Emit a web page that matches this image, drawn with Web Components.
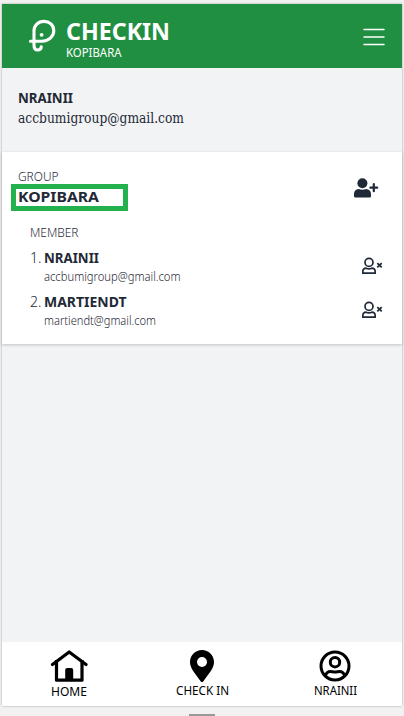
<!DOCTYPE html>
<html lang="en"><head><meta charset="utf-8"><title>Checkin</title>
<style>html,body{margin:0;height:100%;overflow:hidden;background:#f0f0f0}body{font-family:"Noto Sans",sans-serif;color:#1f2937}</style></head>
<body><checkin-app></checkin-app>
<script>
const define=(name,html,ready)=>customElements.define(name,class extends HTMLElement{
  constructor(){super();this.attachShadow({mode:'open'}).innerHTML=html;}
  connectedCallback(){if(ready)ready(this);}
});

// One line of text set to a given measure.
define('text-line',`<style>:host{display:block;white-space:nowrap;text-align:left}span{display:inline-block;transform-origin:0 50%;vertical-align:top}</style><span></span>`,el=>{
  const s=el.shadowRoot.querySelector('span');
  s.textContent=el.getAttribute('text');
  const w=+el.getAttribute('measure');
  el.style.width=w+'px';
  s.style.transform=`scaleX(${w/s.getBoundingClientRect().width})`;
});

const icons={
 logo:['0 0 30 36','<g fill="none" stroke="#fff" stroke-width="3.1" stroke-linecap="round"><path d="M2.5 23.2H14C20.5 23.2 25.8 18.5 25.8 12.7C25.8 7 21.5 3.4 16 3.4C10.2 3.4 6 7.6 6 13V27C6 30.6 7.2 32 9.6 32C12 32 13.2 30.5 13.3 28.7"/></g><circle cx="13.6" cy="16.8" r="1.9" fill="#fff"/>'],
 menu:['0 0 24 24','<g fill="none" stroke="#fff" stroke-linecap="round"><path stroke-width="1.5" d="M2 4.5H22M2 19.5H22"/><path stroke-width="1.5" d="M2 12H22"/></g>'],
 add:['0 0 26 22','<g fill="#1f2937"><circle cx="9.4" cy="6.2" r="5"/><path d="M5.7 11.9C7.8 13 11 13 13.1 11.9C16.2 12.1 18 13.9 18 16.9V19.2Q18 20.6 16.6 20.6H2.4Q1 20.6 1 19.2V16.9C1 13.9 2.7 12.1 5.7 11.9Z"/></g><path d="M20.8 7.2V14.2M17.4 10.7H24.2" stroke="#1f2937" stroke-width="2.2" stroke-linecap="round"/>'],
 remove:['0 0 22 18','<g fill="none" stroke="#1f2937" stroke-width="1.7"><circle cx="8" cy="5.4" r="4"/><path d="M5.2 11.2C7 12 9 12 10.8 11.2C13 11.2 14.2 12.7 14.2 14.9V16.2H1.8V14.9C1.8 12.7 3 11.2 5.2 11.2Z" stroke-linejoin="round"/></g><path d="M16.3 6.2L20.7 10.4M20.7 6.2L16.3 10.4" stroke="#1f2937" stroke-width="1.8"/>'],
 home:['0 0 38 32','<path d="M6.5 10V30.2H32V10" fill="none" stroke="#000" stroke-width="3.2" stroke-linejoin="round"/><path d="M2.5 14.5L19.2 2L36 14.5" fill="none" stroke="#000" stroke-width="3.2" stroke-linecap="round" stroke-linejoin="round"/><path d="M15.2 31V20Q15.2 18 17.2 18H21.2Q23.2 18 23.2 20V31Z"/>'],
 pin:['0 0 24 32','<path fill-rule="evenodd" d="M12 0C5.4 0 0 5.3 0 12C0 18 4.8 23.3 10.8 31.4Q12 32.6 13.2 31.4C19.2 23.3 24 18 24 12C24 5.3 18.6 0 12 0ZM12 7A5 5 0 1 1 12 17A5 5 0 0 1 12 7Z"/>'],
 user:['0 0 32 32','<g fill="none" stroke="#000" stroke-width="3"><circle cx="16" cy="16" r="14"/><circle cx="16" cy="12.2" r="4.7"/><path d="M6.2 26C7.1 22.8 9 21.5 11.6 21.5C13 21.5 14.2 22.1 16 22.1C17.8 22.1 19 21.5 20.4 21.5C23 21.5 24.9 22.8 25.8 26"/></g>']
};
define('app-icon',`<style>:host{display:block;flex:none}svg{display:block}</style><svg></svg>`,el=>{
  const [box,body]=icons[el.getAttribute('name')],s=el.shadowRoot.querySelector('svg'),d=box.split(' ');
  s.setAttribute('viewBox',box);s.setAttribute('width',d[2]);s.setAttribute('height',d[3]);s.innerHTML=body;
});

define('app-header',`<style>:host{display:flex;box-sizing:border-box;height:64px;padding:13px 16px 0 23px;background:#208f42;color:#fff}
app-icon[name=logo]{margin:1px 8px 0 3px}app-icon[name=menu]{margin:8px 0 0 auto}
.t{font:700 23px/28px "Noto Sans"}.s{font:12px/16px "Noto Sans"}</style>
<app-icon name="logo"></app-icon><div class="brand"><text-line class="t" text="CHECKIN" measure="104"></text-line><text-line class="s" text="KOPIBARA" measure="55.5"></text-line></div><app-icon name="menu"></app-icon>`);

define('user-summary',`<style>:host{display:block;box-sizing:border-box;height:84px;padding:20px 15.5px}
.n{font:700 14px/20px "Noto Sans"}.e{font:14px/20px "DejaVu Serif",serif}</style>
<text-line class="n" text="NRAINII" measure="55"></text-line><text-line class="e" text="accbumigroup@gmail.com" measure="166"></text-line>`);

define('member-row',`<style>:host{display:flex;height:36px}
.i{font:300 14px/20px "Noto Sans";width:15px}.n{font:700 14px/20px "Noto Sans"}.e{font:300 12px/18px "Noto Sans";color:#1f2937}
app-icon{margin:9px 0 0 auto}</style><text-line class="i"></text-line><div><text-line class="n"></text-line><text-line class="e"></text-line></div><app-icon name="remove"></app-icon>`,el=>{
  const put=(c,t,w)=>{const o=el.shadowRoot.querySelector(c),n=document.createElement('text-line');n.className=o.className;n.setAttribute('text',t);n.setAttribute('measure',w);o.replaceWith(n);};
  const [nw,ew]=el.getAttribute('measures').split(' ');
  put('.i',el.getAttribute('index'),11.5);put('.n',el.getAttribute('name'),nw);put('.e',el.getAttribute('email'),ew);
  el.shadowRoot.querySelector('.i').style.marginRight='2.5px';
});

define('group-card',`<style>:host{display:block;box-sizing:border-box;height:192px;padding:16px 15px 16px 15.5px;background:#fff;box-shadow:0 1px 3px #0003}
.top{display:flex;justify-content:space-between;height:39px}.top app-icon{margin:9px 8px 0 0}
.g{font:300 12px/17px "Noto Sans"}.name{position:relative;width:110px}.name::before{content:"";position:absolute;left:-6.5px;top:-1px;width:107px;height:17px;border:5px solid #22b14c}
.k{font:700 15px/22px "Noto Sans"}.m{font:300 12px/18px "Noto Sans";margin-bottom:6px}
.members{margin:17px 0 0 12.5px}.members member-row+member-row{margin-top:8px}.members member-row{margin-right:4px}</style>
<div class="top"><div><text-line class="g" text="GROUP" measure="40.5"></text-line><div class="name"><text-line class="k" text="KOPIBARA" measure="81"></text-line></div></div><app-icon name="add"></app-icon></div>
<div class="members"><text-line class="m" text="MEMBER" measure="48.5"></text-line>
<member-row index="1." name="NRAINII" email="accbumigroup@gmail.com" measures="55 136.5"></member-row>
<member-row index="2." name="MARTIENDT" email="martiendt@gmail.com" measures="82.5 112"></member-row></div>`);

define('nav-item',`<style>:host{display:flex;flex-direction:column;align-items:center;font:12px/18px "Noto Sans";color:#000}</style><slot></slot>`);
define('bottom-nav',`<style>:host{display:grid;grid-template-columns:134px 132px 134px;box-sizing:border-box;height:64px;padding-top:8px;background:#fff;margin-top:auto}
.home text-line{margin-top:1px}</style>
<nav-item class="home"><app-icon name="home"></app-icon><text-line text="HOME" measure="36"></text-line></nav-item>
<nav-item><app-icon name="pin"></app-icon><text-line text="CHECK IN" measure="53"></text-line></nav-item>
<nav-item><app-icon name="user"></app-icon><text-line text="NRAINII" measure="43"></text-line></nav-item>`);

define('checkin-app',`<style>:host{display:block;box-sizing:border-box;height:716px;padding:4px 2px 0;background:#f1f1f1}
.screen{display:flex;flex-direction:column;height:702px;background:#f2f3f5;box-shadow:0 0 2px #0005}
.foot{height:10px;display:flex;align-items:flex-end;justify-content:center}.foot i{width:26px;height:2px;background:#999}</style>
<div class="screen"><app-header></app-header><user-summary></user-summary><group-card></group-card><bottom-nav></bottom-nav></div><div class="foot"><i></i></div>`);
</script></body></html>
